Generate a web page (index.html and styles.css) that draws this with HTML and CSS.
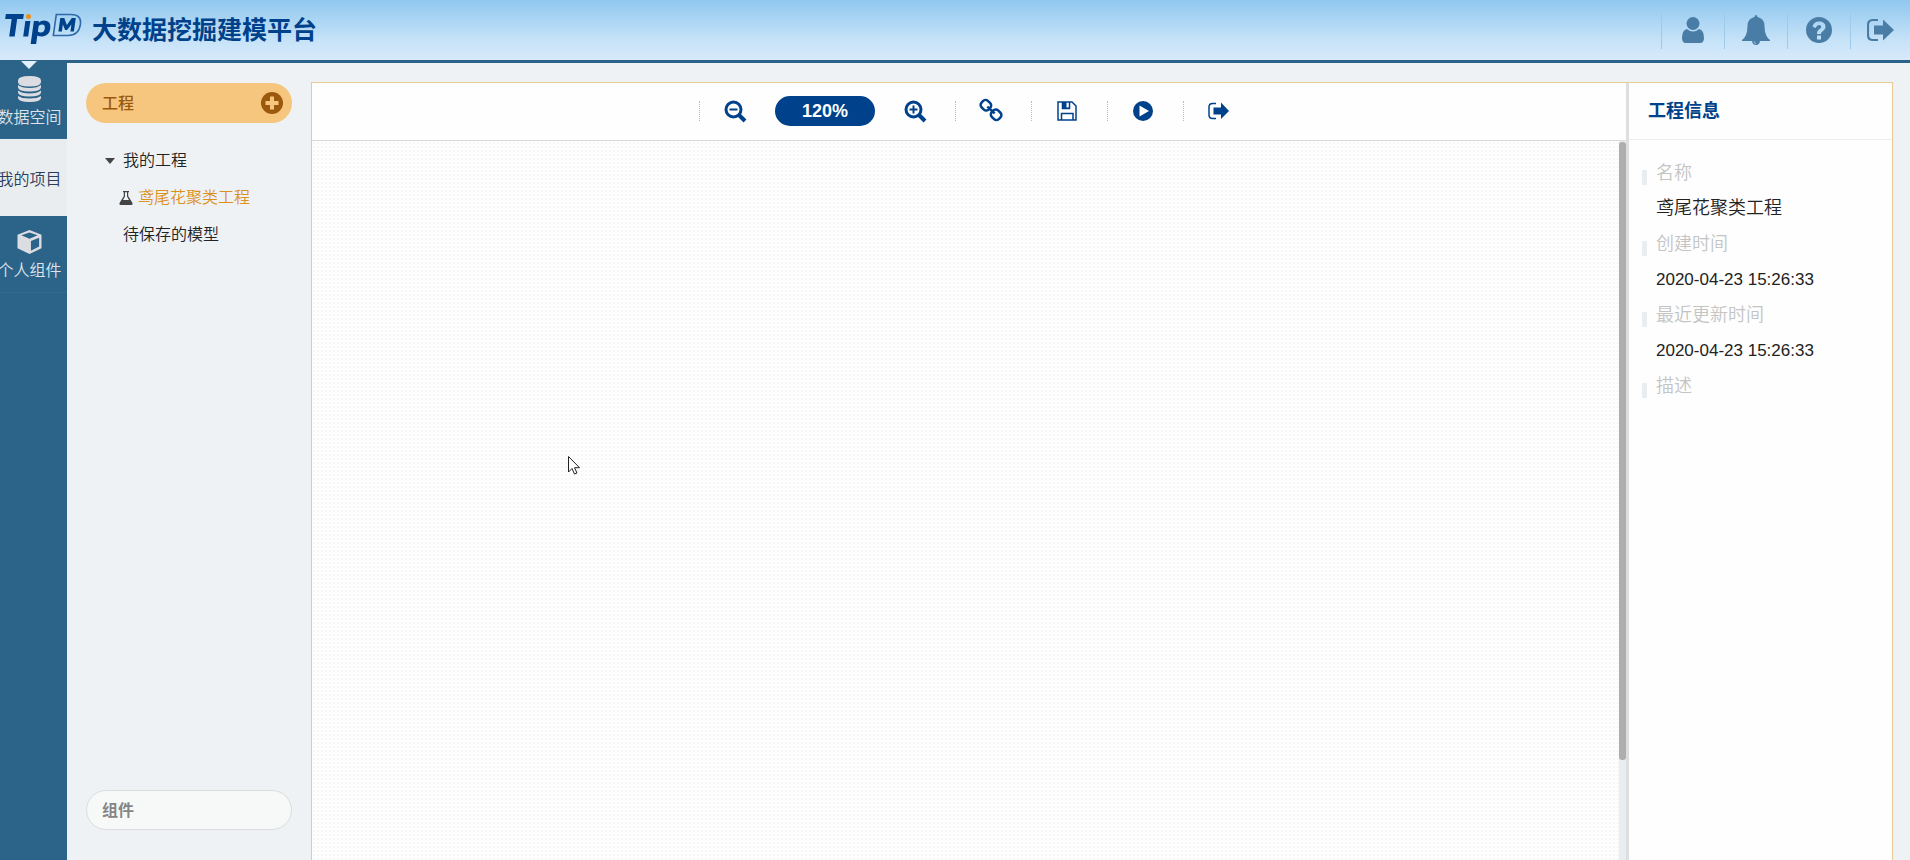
FILE: index.html
```html
<!DOCTYPE html>
<html lang="zh-CN">
<head>
<meta charset="utf-8">
<title>大数据挖掘建模平台</title>
<link rel="stylesheet" href="styles.css">
</head>
<body>
<header class="header">
  <svg class="logo" viewBox="0 2 76 30" role="img" aria-label="TipDM">
    <g transform="translate(1 0) skewX(-8)" fill="#00418b">
      <path d="M1 1H19V6H13V23.500H7.500V6H1Z"/>
      <path d="M21.500 8H26.500V23.500H21.500Z"/>
      <path fill-rule="evenodd" d="M30 8H35V9.500Q37 7.500 40.500 7.500Q47.500 8 47.500 15.500Q47.500 23 40.500 23.500Q37 23.500 35.500 22.500V31H30ZM35.500 13V18.500Q36.500 19.500 38.500 19.500Q42 19.500 42 15.500Q42 11.500 38.500 11.500Q36 11.500 35.500 13Z"/>
      <path d="M51.500 1.500H66Q77 1.500 77 11.500Q77 22.500 66 22.500H51.500Z" fill="none" stroke="#2f69a8" stroke-width="1.600"/>
      <path d="M56 18.500V5H60L63.500 12L67.500 5H71.500V18.500H68V11.500L64.500 17H62.500L59.500 11.500V18.500Z"/>
    </g>
    <circle cx="24.500" cy="3.500" r="2.500" fill="#e8921d"/>
  </svg>
  <h1 class="brand">大数据挖掘建模平台</h1>
  <nav class="header-actions">
    <button class="header-action" type="button" aria-label="用户"><svg viewBox="0 0 28 28"><circle cx="14" cy="7.500" r="6.500"/><path d="M8 13Q14 18 20 13Q25 14 25 22Q25 27 21 27H7Q3 27 3 22Q3 14 8 13Z"/></svg></button>
    <button class="header-action" type="button" aria-label="通知"><svg class="bell" viewBox="0 0 28 30"><path d="M14 0Q15.500 0 15.500 2Q22.500 3.500 22.500 11Q22.500 21 28 25V26H18Q17.500 30 14 30Q10.500 30 10 26H0V25Q5.500 21 5.500 11Q5.500 3.500 12.500 2Q12.500 0 14 0Z"/><path d="M12 26.500Q12 28 14 28.500" fill="none" stroke="#b9dcf5" stroke-width=".8"/></svg></button>
    <button class="header-action" type="button" aria-label="帮助"><svg viewBox="0 0 28 28"><path fill-rule="evenodd" d="M14 1A13 13 0 1 0 14 27A13 13 0 1 0 14 1ZM12 19.500H16V23.500H12ZM7.500 10.500Q9 5.500 14 5.500Q20.500 5.500 20.500 11Q20.500 13.500 18 15Q16 16 16 17.500V18H12V17Q12 14.500 14.500 13Q16.300 12 16.300 11Q16.300 9 14 9Q12 9 10.500 12Z"/></svg></button>
    <button class="header-action" type="button" aria-label="退出"><svg viewBox="1 0 28 28"><path d="M12 4H7Q2 4 2 9V19Q2 24 7 24H12" fill="none" stroke="#4a7da6" stroke-width="2.200"/><path d="M8 9.500H17V3.500L28 14L17 24.500V18.500H8Z"/></svg></button>
  </nav>
</header>
<div class="layout">
  <nav class="rail">
    <a class="rail-item rail-first" href="#">
      <svg class="rail-icon" viewBox="0 0 24 26"><path d="M0.500 4.500Q0.500 0 12 0T23.500 4.500V6Q23.500 10.500 12 10.500T0.500 6Z"/><path d="M0.500 9Q4 12 12 12T23.500 9V11.500Q23 15.500 12 15.500T0.500 11.500Z"/><path d="M0.500 14.500Q4 17.500 12 17.500T23.500 14.500V16.500Q23 20.500 12 20.500T0.500 16.500Z"/><path d="M0.500 20Q4 22.500 12 22.500T23.500 20V22Q23 26 12 26T0.500 22Z"/></svg>
      <span>数据空间</span>
    </a>
    <a class="rail-item rail-active" href="#"><span>我的项目</span></a>
    <a class="rail-item" href="#">
      <svg class="rail-icon" viewBox="0 0 26 26"><path fill-rule="evenodd" d="M13 0.500L25.500 5.500V19.500L13 25.500L0.500 19.500V5.500ZM4.500 6L13 9.500L21.500 6L13 3ZM14.500 12V22L23 17.800V8.500Z"/></svg>
      <span>个人组件</span>
    </a>
  </nav>
  <aside class="explorer">
    <div class="pill pill-project"><h2 class="pill-title">工程</h2>
      <button class="add" type="button" aria-label="新建工程"><svg viewBox="0 0 22 22"><circle cx="11" cy="11" r="11" fill="#9a590d"/><path d="M11 4.500V17.500M4.500 11H17.500" stroke="#f6c67e" stroke-width="4"/></svg></button>
    </div>
    <ul class="tree">
      <li class="tree-row"><svg class="caret" viewBox="0 0 10 6"><path d="M0 0H10L5 6Z"/></svg>我的工程</li>
      <li class="tree-row tree-child"><svg class="flask" viewBox="0 0 14 14"><path fill-rule="evenodd" d="M4 0H10V1.200H9.200V5L13.500 12Q14 14 12.500 14H1.500Q0 14 .5 12L4.800 5V1.200H4ZM6 1.200V5.500L4 9H10L8 5.500V1.200Z"/></svg><a class="tree-link" href="#">鸢尾花聚类工程</a></li>
      <li class="tree-row tree-plain">待保存的模型</li>
    </ul>
    <button class="pill pill-component" type="button">组件</button>
  </aside>
  <main class="workspace">
    <section class="editor">
      <div class="toolbar">
        <div class="tool-group tool-zoom">
          <button class="tool" type="button" aria-label="缩小"><svg viewBox="0 0 22 22"><g fill="none" stroke="#00418b"><circle cx="9.500" cy="9.500" r="7.500" stroke-width="3"/><path d="M15 15L21 21" stroke-width="4"/><path d="M5.500 9.500H13.500" stroke-width="2"/></g></svg></button>
          <output class="zoom-value">120%</output>
          <button class="tool" type="button" aria-label="放大"><svg viewBox="0 0 22 22"><g fill="none" stroke="#00418b"><circle cx="9.500" cy="9.500" r="7.500" stroke-width="3"/><path d="M15 15L21 21" stroke-width="4"/><path d="M5.500 9.500H13.500M9.500 5.500V13.500" stroke-width="2"/></g></svg></button>
        </div>
        <div class="tool-group"><button class="tool" type="button" aria-label="连接"><svg viewBox="0 0 22 22"><g fill="none" stroke="#00418b" stroke-width="2.500" transform="translate(0 -1) rotate(43 11 11)"><rect x="-1" y="6.500" width="10" height="9" rx="3.500"/><rect x="13" y="6.500" width="10" height="9" rx="3.500"/><path d="M6 11H16"/></g></svg></button></div>
        <div class="tool-group"><button class="tool" type="button" aria-label="保存"><svg viewBox="0 0 22 22"><g fill="none" stroke="#00418b" stroke-width="1.500"><path d="M2 2H16L20 6V20H2Z"/><path d="M5.500 20V13.500H17V20"/><path d="M13.500 2V8.500H6.500V2"/></g><path fill="#00418b" d="M6 2H10.500V7.500H14V9H6Z"/></svg></button></div>
        <div class="tool-group"><button class="tool" type="button" aria-label="运行"><svg viewBox="0 0 22 22"><circle cx="11" cy="11" r="10" fill="#00418b"/><path d="M7.500 5.500L17 11L7.500 16.500Z" fill="#fff"/></svg></button></div>
        <div class="tool-group tool-last"><button class="tool" type="button" aria-label="导出"><svg viewBox="1 0 22 22"><path d="M9 3.500H5.500Q2 3.500 2 7V15Q2 18.500 5.500 18.500H9" fill="none" stroke="#00418b" stroke-width="1.500"/><path d="M6.500 7.500H14V2.500L22 11L14 19V14.500H6.500Z" fill="#00418b"/></svg></button></div>
      </div>
      <div class="canvas">
        <svg class="cursor" viewBox="0 0 12 19"><path d="M.5 .5V16L4 12.500L6.500 18L9 17L6.500 11.700H11.500Z" fill="#fff" stroke="#222"/></svg>
        <div class="scrollbar"><div class="thumb"></div></div>
      </div>
    </section>
    <aside class="info">
      <h2 class="info-title">工程信息</h2>
      <dl class="info-list">
        <dt>名称</dt><dd>鸢尾花聚类工程</dd>
        <dt>创建时间</dt><dd class="date">2020-04-23 15:26:33</dd>
        <dt>最近更新时间</dt><dd class="date">2020-04-23 15:26:33</dd>
        <dt>描述</dt>
      </dl>
    </aside>
  </main>
</div>
</body>
</html>
```
FILE: styles.css
```css
* { box-sizing: border-box; }
body {
  margin: 0;
  height: 100vh;
  display: flex;
  flex-direction: column;
  overflow: hidden;
  background: #eef2f5;
  color: #222;
  font: 350 16px/24px "Liberation Sans", "Noto Sans CJK SC", sans-serif;
}
button { margin: 0; padding: 0; border: 0; background: none; font: inherit; color: inherit; cursor: pointer; }
svg { display: block; }
a { color: inherit; text-decoration: none; }
h1, h2, ul, dl, dd { margin: 0; padding: 0; }

.header {
  flex: none;
  display: flex;
  align-items: center;
  height: 63px;
  padding-left: 4px;
  background: linear-gradient(#90c8ef, #c5e2f8 66%, #d8eafa);
  border-bottom: 3px solid #2b6389;
}
.logo { width: 76px; height: 30px; overflow: visible; }
.brand { margin-left: 12px; font-size: 25px; line-height: 36px; font-weight: 700; color: #00418b; }
.header-actions { display: flex; margin-left: auto; }
.header-action {
  display: grid;
  place-items: center;
  width: 63px;
  height: 37px;
  border-left: 1px solid #9fcbea;
}
.header-action:last-child { width: 60px; }
.header-action svg { width: 28px; height: 28px; fill: #4a7da6; }
.header-action .bell { height: 30px; }

.layout { flex: 1; display: flex; min-height: 0; }
.rail { flex: none; width: 67px; background: #2b6389; color: #dde3e9; }
.rail-item {
  display: flex;
  flex-direction: column;
  align-items: center;
  gap: 4px;
  height: 77px;
  padding: 13px 8px 0 0;
  border-bottom: 1px solid #316a90;
  white-space: nowrap;
}
.rail-icon { flex: none; width: 25px; height: 26px; fill: #dbdde2; }
.rail-first { position: relative; height: 76px; }
.rail-first::before {
  content: "";
  position: absolute;
  top: -2px;
  left: 21px;
  border: 8px solid transparent;
  border-top-color: #e2f0fb;
  border-bottom: 0;
}
.rail-active { justify-content: center; padding-top: 4px; background: #e9edf0; color: #2a3d5c; border: 0; }

.explorer { flex: none; display: flex; flex-direction: column; width: 244px; padding: 20px 19px 30px; }
.pill { display: flex; align-items: center; justify-content: space-between; height: 40px; padding: 0 9px 0 16px; border-radius: 20px; }
.pill-project { background: #f6c67e; color: #9a590d; }
.pill-title { padding-top: 2px; font-size: 16px; line-height: 24px; font-weight: 500; }
.add, .add svg { width: 22px; height: 22px; }
.pill-component { margin-top: auto; padding: 2px 15px 0; background: #f7f9f8; border: 1px solid #dcdcdc; color: #858585; font-weight: 700; }
.tree { padding: 19px 0 0 19px; list-style: none; }
.tree-row { display: flex; align-items: center; height: 37px; }
.caret { width: 10px; height: 6px; margin-right: 8px; fill: #444; }
.tree-child { padding-left: 14px; }
.flask { width: 14px; height: 14px; margin-right: 5px; fill: #444; }
.tree-link { color: #dc911c; }
.tree-plain { padding-left: 18px; }

.workspace {
  flex: 1;
  display: flex;
  min-width: 0;
  margin: 19px 17px 0 0;
  background: #fefefe;
  border: 1px solid #e9ca94;
  border-bottom: 0;
}
.editor { flex: 1; display: flex; flex-direction: column; min-width: 0; }
.toolbar { flex: none; display: flex; align-items: center; justify-content: center; height: 58px; padding-bottom: 1px; border-bottom: 1px solid #dadada; }
.tool-group { display: flex; align-items: center; height: 20px; padding: 0 29px 0 24px; border-left: 1px dotted #bbb; }
.tool-zoom { gap: 29px; }
.tool-last { padding-right: 9px; }
.tool, .tool svg { width: 22px; height: 22px; overflow: visible; }
.zoom-value { width: 100px; border-radius: 15px; background: #00418b; color: #fff; font-size: 18px; line-height: 30px; font-weight: 700; text-align: center; }
.canvas {
  flex: 1;
  position: relative;
  display: flex;
  justify-content: flex-end;
  background: radial-gradient(circle, #f6f6f6 1px, transparent 1px) 0 0 / 4px 4px #fefefe;
}
.cursor { position: absolute; left: 256px; top: 315px; width: 12px; height: 19px; }
.scrollbar { width: 7px; background: #e8edf0; }
.thumb { height: 86%; margin-top: 1px; border-radius: 3px; background: #adafae; }

.info { flex: none; width: 266px; border-left: 3px solid #dedede; }
.info-title { height: 57px; padding-left: 19px; border-bottom: 1px solid #eee; color: #00418b; font-size: 18px; line-height: 56px; font-weight: 700; }
.info-list { padding: 15px 0 0 27px; font-size: 18px; }
.info-list dt { position: relative; line-height: 36px; color: #c4c4c4; }
.info-list dt::before { content: ""; position: absolute; left: -14px; top: 15px; width: 5px; height: 15px; background: #e8edf0; }
.info-list dd { line-height: 35px; }
.info-list .date { font-size: 17px; }
```
